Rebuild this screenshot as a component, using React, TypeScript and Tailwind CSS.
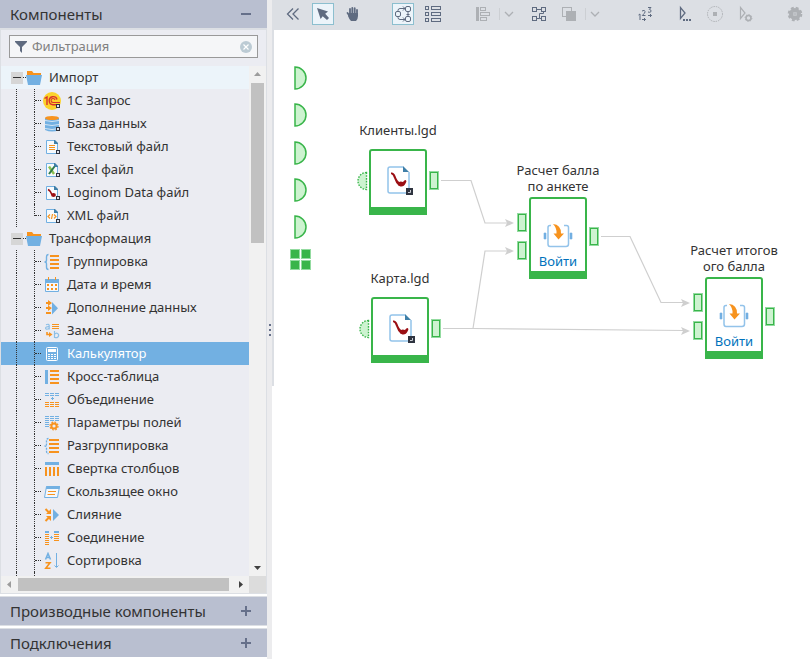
import React from "react";

const BLUE = "#72b0e2";
const ORANGE = "#f7931e";
const DARK = "#2f3440";

function Marker() {
  return (
    <>
      <rect x="13" y="12" width="4" height="4" fill={DARK} />
      <rect x="14" y="13" width="2" height="2" fill="#dfe3ec" />
    </>
  );
}

function FileShape({ children }: { children: React.ReactNode }) {
  return (
    <>
      <path d="M3.5 2.5H11L14.5 6V15.5H3.5Z" fill="#f6fafd" stroke={BLUE} />
      <path d="M11 2H12L15 5V6H11Z" fill="#3f7fa8" />
      {children}
      <Marker />
    </>
  );
}

function Bars({ x, w }: { x: number; w: number }) {
  return (
    <>
      {[2, 6, 10, 14].map((y) => (
        <rect key={y} x={x} y={y} width={w} height="2" fill={ORANGE} />
      ))}
    </>
  );
}

const icons: Record<string, React.ReactNode> = {
  onec: (
    <>
      <circle cx="9" cy="9" r="9" fill="#fcd32a" />
      <g fill="none" stroke="#d8322c" strokeWidth="1.4">
        <path d="M1.5 6.5L4 5V13" />
        <path d="M14 7.500A4 4 0 1 0 10 12.700H17" />
        <path d="M12 8A2 2 0 1 0 10 10.500H17" strokeWidth="1.1" />
      </g>
      <Marker />
    </>
  ),
  db: (
    <>
      <path d="M2 3V15Q9 18 16 15V3Z" fill={BLUE} />
      <ellipse cx="9" cy="3" rx="7" ry="2" fill={ORANGE} />
      <path d="M2 5.5Q9 7.500 16 5.5M2 9.5Q9 11.500 16 9.5M2 13.5Q9 15.500 16 13.5" fill="none" stroke="#d3e4f4" />
      <Marker />
    </>
  ),
  text: (
    <FileShape>
      <path d="M6 7.5H12M6 9.5H12M6 11.5H12" stroke={ORANGE} />
    </FileShape>
  ),
  excel: (
    <FileShape>
      <path d="M6 5.5L11 13" stroke="#8cc152" strokeWidth="2.4" />
      <path d="M11.5 5.5L6 13" stroke="#2f7a4a" strokeWidth="2" />
    </FileShape>
  ),
  lgd: (
    <FileShape>
      <path d="M5 5.5Q7.5 6.5 9 11" fill="none" stroke="#9b0f14" strokeWidth="1.4" />
      <ellipse cx="10.5" cy="11" rx="2.4" ry="2" fill="#9b0f14" />
    </FileShape>
  ),
  xml: (
    <FileShape>
      <path d="M7 7.5L5 9.5L7 11.5M11 7.5L13 9.5L11 11.5M9.5 7L8.5 12" fill="none" stroke={ORANGE} strokeWidth="1.2" />
    </FileShape>
  ),
  group: (
    <>
      <path d="M5.5 1.5Q3.5 1.5 3.5 4V7Q3.5 9 1.5 9Q3.5 9 3.5 11V14Q3.5 16.5 5.5 16.5" fill="none" stroke={BLUE} strokeWidth="1.4" />
      <Bars x={7} w={9} />
    </>
  ),
  date: (
    <>
      <path d="M2.5 4.5H15.5V15.5H2.5Z" fill="#f4f7fb" stroke={BLUE} />
      <rect x="2" y="3" width="14" height="4" fill={BLUE} />
      <path d="M5.5 1V4M12.5 1V4" stroke={ORANGE} />
      <path d="M4 9H14M4 13H14" stroke={ORANGE} strokeWidth="2" strokeDasharray="2 2" />
    </>
  ),
  extend: (
    <>
      <path d="M3 4H7M3 9H7M3 14H8" stroke={ORANGE} strokeWidth="2" />
      <path d="M5 1L9 4L5 7ZM5 6.5L9 9L5 12Z" fill={ORANGE} />
      <path d="M9 3L15 9.2L9 15.5Z" fill={BLUE} />
    </>
  ),
  replace: (
    <>
      <path d="M3 2.7Q6 1.500 6.2 3.500V7.500M6 4.700Q2.5 4.500 2.6 6.2Q3.2 8.1 6 6.500" fill="none" stroke="#8dbfe6" strokeWidth="1.2" />
      <path d="M11.5 9V16M11.5 12.5Q12.5 11 14 11.2Q16 11.8 15.6 14Q14.5 16.6 11.5 15.2" fill="none" stroke="#8dbfe6" strokeWidth="1.2" />
      <path d="M9 2.5H16M9 4.5H16M9 6.5H16" stroke={ORANGE} />
      <path d="M4 10V12.5H6.500" fill="none" stroke={ORANGE} strokeWidth="1.6" />
      <path d="M6 10L9.500 12.5L6 15Z" fill={ORANGE} />
    </>
  ),
  calc: (
    <>
      <rect x="3.5" y="2.5" width="11" height="13" rx="1" fill="#72b0e2" stroke="#fff" />
      <rect x="5" y="4" width="8" height="3" fill="#fff" />
      <path d="M5 9.5H13M5 11.5H13M5 13.5H13" stroke="#fff" strokeDasharray="2 1" />
    </>
  ),
  cross: (
    <>
      <rect x="2" y="2" width="3" height="14" fill={BLUE} />
      <Bars x={7} w={9} />
    </>
  ),
  union: (
    <>
      <path d="M2 2.5H16M2 4.5H16" stroke={BLUE} strokeDasharray="4 1" />
      <path d="M9.5 6V9M8 7.5H11" stroke={BLUE} />
      <path d="M2 11.5H16M2 13.5H16M2 15.5H16" stroke={ORANGE} strokeDasharray="4 1" />
    </>
  ),
  fields: (
    <>
      <path d="M2 2.5H16M2 4.5H16M2 6.5H16" stroke={BLUE} strokeDasharray="4 1" />
      <path d="M2 8.5H6M2 10.5H6M2 12.5H6" stroke={BLUE} />
      <circle cx="11" cy="12" r="2.6" fill="none" stroke={ORANGE} strokeWidth="2" />
      <circle cx="11" cy="12" r="4" fill="none" stroke={ORANGE} strokeWidth="1.2" strokeDasharray="1.7 1.440" />
    </>
  ),
  ungroup: (
    <>
      <path d="M5.5 1.5Q3.5 1.5 3.5 4V7Q3.5 9 1.5 9Q3.5 9 3.5 11V14Q3.5 16.5 5.5 16.5" fill="none" stroke={BLUE} strokeWidth="1.3" strokeDasharray="2 1" />
      <Bars x={6} w={10} />
    </>
  ),
  fold: (
    <>
      <rect x="2" y="2" width="14" height="3" fill={BLUE} />
      <path d="M3 7V16M7 7V16M11 7V16M15 7V16" stroke={ORANGE} strokeWidth="2" />
    </>
  ),
  window: (
    <>
      <path d="M3.5 3.5H16.5L14.5 14.5H1.5Z" fill="#f4f7fb" stroke={BLUE} />
      <path d="M3.5 3H17L16.5 6H3Z" fill={BLUE} />
      <path d="M5 8.5H13M4.5 11.5H12" stroke={ORANGE} />
    </>
  ),
  merge: (
    <>
      <path d="M2.5 3L6 6.5M2.5 15L6 11.5" stroke={ORANGE} strokeWidth="2" />
      <path d="M8 3V8H3ZM8 15V10H3Z" fill={ORANGE} />
      <path d="M10 3L16 9L10 15Z" fill={BLUE} />
    </>
  ),
  join: (
    <>
      <path d="M2 3H6M11 3H16" stroke={BLUE} strokeWidth="2" />
      <path d="M4 5V16" stroke={ORANGE} strokeWidth="4" strokeDasharray="1 1" />
      <path d="M13.5 5V13" stroke={ORANGE} strokeWidth="5" strokeDasharray="1 1" />
      <path d="M8.5 7V10M7 8.5H10" stroke={BLUE} />
    </>
  ),
  sort: (
    <>
      <path d="M2.5 7.5L5 1.5L7.5 7.5M3.5 5.5H6.5" fill="none" stroke={BLUE} strokeWidth="1.5" />
      <path d="M2.5 10.8H7L2.8 16.3H7.5" fill="none" stroke={ORANGE} strokeWidth="1.6" />
      <path d="M13.5 1V15M11.5 13.5L13.5 15.5L15.5 13.5" fill="none" stroke={BLUE} />
    </>
  ),
};

type Item = { icon: string; label: string; selected?: boolean };

const groups: { label: string; hover?: boolean; open?: boolean; items: Item[] }[] = [
  {
    label: "Импорт",
    hover: true,
    items: [
      { icon: "onec", label: "1С Запрос" },
      { icon: "db", label: "База данных" },
      { icon: "text", label: "Текстовый файл" },
      { icon: "excel", label: "Excel файл" },
      { icon: "lgd", label: "Loginom Data файл" },
      { icon: "xml", label: "XML файл" },
    ],
  },
  {
    label: "Трансформация",
    open: true,
    items: [
      { icon: "group", label: "Группировка" },
      { icon: "date", label: "Дата и время" },
      { icon: "extend", label: "Дополнение данных" },
      { icon: "replace", label: "Замена" },
      { icon: "calc", label: "Калькулятор", selected: true },
      { icon: "cross", label: "Кросс-таблица" },
      { icon: "union", label: "Объединение" },
      { icon: "fields", label: "Параметры полей" },
      { icon: "ungroup", label: "Разгруппировка" },
      { icon: "fold", label: "Свертка столбцов" },
      { icon: "window", label: "Скользящее окно" },
      { icon: "merge", label: "Слияние" },
      { icon: "join", label: "Соединение" },
      { icon: "sort", label: "Сортировка" },
    ],
  },
];

const guide = "border-dotted border-[#333]";

function TreeLeaf({ item, last }: { item: Item; last: boolean }) {
  return (
    <li className={`flex h-[23px] shrink-0 items-center pl-[15px] whitespace-nowrap ${item.selected ? "bg-[#72b0e2] text-white" : ""}`}>
      <span className={`h-full w-[18px] shrink-0 border-l ${guide}`} />
      <span className={`w-[9px] shrink-0 self-start border-l ${guide} ${last ? "h-3" : "h-full"}`}>
        <span className={`block h-3 w-[6px] border-b ${guide}`} />
      </span>
      <svg width="18" height="18" viewBox="0 0 18 18" className="shrink-0">{icons[item.icon]}</svg>
      <span className="pl-[6px]">{item.label}</span>
    </li>
  );
}

function Tree() {
  return (
    <ul className="flex min-w-0 flex-1 flex-col overflow-hidden">
      {groups.map((g) => (
        <li key={g.label} className="shrink-0">
          <div className={`flex h-[23px] items-center pl-[10px] ${g.hover ? "bg-[#ecf4fa]" : ""}`}>
            <button aria-label="Свернуть" className="flex h-3 w-3 items-center justify-center bg-[#d6d6d6]">
              <span className="h-px w-2 bg-[#333]" />
            </button>
            <span className={`w-[3px] border-b ${guide}`} />
            <svg width="16" height="17" viewBox="0 0 16 17">
              <path d="M1 2H6L7.5 4H15V8H1Z" fill={ORANGE} />
              <path d="M0 6H16L14 16H2Z" fill={BLUE} />
            </svg>
            <span className="pl-[7px]">{g.label}</span>
          </div>
          <ul>
            {g.items.map((it, i) => (
              <TreeLeaf key={it.label} item={it} last={!g.open && i === g.items.length - 1} />
            ))}
          </ul>
        </li>
      ))}
      <li aria-hidden="true" className="flex flex-1 pl-[15px]">
        <span className={`w-[18px] border-l ${guide}`} />
        <span className={`border-l ${guide}`} />
      </li>
    </ul>
  );
}

function SectionHeader({ title, open }: { title: string; open?: boolean }) {
  return (
    <button className="flex h-7 w-full shrink-0 items-center justify-between bg-[#b9bfd0] pr-4 pl-[10px] text-[15px] text-[#333]">
      <span>{title}</span>
      <svg width="10" height="10" viewBox="0 0 10 10" stroke="#66708a" strokeWidth="2">
        <path d={open ? "M0 5H10" : "M0 5H10M5 0V10"} />
      </svg>
    </button>
  );
}

function ScrollArrow({ d, label, dim }: { d: string; label: string; dim?: boolean }) {
  return (
    <button aria-label={label} className="flex h-[17px] w-[17px] shrink-0 items-center justify-center">
      <svg width="7" height="7" viewBox="0 0 7 7" fill={dim ? "#9c9c9c" : "#404040"}>
        <path d={d} />
      </svg>
    </button>
  );
}

function Sidebar() {
  return (
    <aside className="flex w-[267px] shrink-0 flex-col bg-white">
      <SectionHeader title="Компоненты" open />
      <div className="flex min-h-0 flex-1 flex-col border border-t-2 border-[#dcdfe4] bg-[#ebecf2]">
        <div className="mx-2 mt-[5px] mb-2 flex h-[23px] shrink-0 items-center border border-[#999] bg-[#f5f6f8] px-[5px]">
          <svg width="12" height="12" viewBox="0 0 12 12" fill="#5f6b80">
            <path d="M0 0H12V1L7 6V12L5 10V6L0 1Z" />
          </svg>
          <input
            aria-label="Фильтрация"
            placeholder="Фильтрация"
            className="ml-[5px] min-w-0 flex-1 bg-transparent text-[13px] text-[#333] outline-none placeholder:text-[#808080]"
          />
          <button aria-label="Очистить">
            <svg width="12" height="12" viewBox="0 0 12 12">
              <circle cx="6" cy="6" r="6" fill="#bccbd4" />
              <path d="M3.5 3.5L8.5 8.5M8.5 3.5L3.5 8.5" stroke="#fff" strokeWidth="1.2" />
            </svg>
          </button>
        </div>
        <div className="flex min-h-0 flex-1">
          <Tree />
          <div className="flex w-[17px] shrink-0 flex-col items-center bg-[#f1f1f1]">
            <ScrollArrow label="Вверх" d="M0 5L3.5 1L7 5Z" dim />
            <div className="h-[160px] w-[13px] bg-[#c1c1c1]" />
            <div className="flex-1" />
            <ScrollArrow label="Вниз" d="M0 2L3.5 6L7 2Z" />
          </div>
        </div>
        <div className="flex h-[17px] shrink-0 items-center bg-[#dcdcdc]">
          <div className="flex flex-1 items-center bg-[#f1f1f1]">
            <ScrollArrow label="Влево" d="M5 0L1 3.5L5 7Z" dim />
            <div className="h-[13px] flex-1 bg-[#c1c1c1]" />
            <div className="w-[3px]" />
            <ScrollArrow label="Вправо" d="M2 0L6 3.5L2 7Z" />
          </div>
          <div className="w-[17px]" />
        </div>
      </div>
      <div className="mt-[2px] border-y border-[#dcdfe4]">
        <SectionHeader title="Производные компоненты" />
      </div>
      <div className="mt-[2px] mb-[2px] border-t border-[#dcdfe4]">
        <SectionHeader title="Подключения" />
      </div>
    </aside>
  );
}

function Tool({ label, active, dim, className = "", children }: { label: string; active?: boolean; dim?: boolean; className?: string; children: React.ReactNode }) {
  return (
    <button
      aria-label={label}
      className={`h-[22px] w-[22px] shrink-0 ${dim ? "text-[#adb0b4]" : "text-[#5f6b80]"} ${active ? "bg-[#ecf4fa] outline -outline-offset-1 outline-[#8cbfcf]" : ""} ${className}`}
    >
      <svg width="22" height="22" viewBox="0 0 22 22" fill="none" stroke="currentColor">{children}</svg>
    </button>
  );
}

function MenuChevron({ label }: { label: string }) {
  return (
    <button aria-label={label} className="-ml-[3px] flex w-[21px] shrink-0 items-center gap-1 text-[#adb0b4]">
      <span className="h-3 w-px bg-[#cccfd3]" />
      <svg width="10" height="6" viewBox="0 0 10 6" fill="none" stroke="currentColor" strokeWidth="1.3">
        <path d="M1 1L5 5L9 1" />
      </svg>
    </button>
  );
}

function Toolbar() {
  return (
    <div className="flex h-[30px] shrink-0 items-center gap-2 bg-[#dcdfe4] pr-1 pb-[2px] pl-[10px]">
      <Tool label="Свернуть панель">
        <path d="M11 5.5L5.5 11L11 16.5M16.5 5.5L11 11L16.5 16.5" strokeWidth="1.3" />
      </Tool>
      <Tool label="Выделение" active>
        <path d="M5 5L16 8.500L13.2 10.700L17 15L15 17L10.7 13.200L8.6 16Z" fill="currentColor" stroke="none" />
      </Tool>
      <Tool label="Перемещение">
        <path d="M8 6V12M10.3 4.8V12M12.7 5.2V12M15 7V12M5.5 10L8 13.5" strokeWidth="1.8" strokeLinecap="round" />
        <path d="M7 10H16V13Q16 16 14 18H9Q7 16 6 13Z" fill="currentColor" stroke="none" />
      </Tool>
      <Tool label="Сценарий" active className="ml-5">
        <rect x="3.5" y="8.5" width="5" height="5" rx="1.5" />
        <rect x="13.5" y="3.5" width="5" height="5" rx="1.5" />
        <rect x="13.5" y="13.5" width="5" height="5" rx="1.5" />
        <path d="M6 8V7.5Q6 5.5 8 5.5H13M6 14V14.5Q6 16.5 8 16.5H13M16 9V13M11 3.5L13 5.5L11 7.5M11 14.5L13 16.5L11 18.5M14.5 11.5H17.5" />
      </Tool>
      <Tool label="Список">
        {[3.5, 9.5, 15.5].map((y) => (
          <g key={y}>
            <rect x="3.5" y={y} width="3" height="3" />
            <rect x="9.5" y={y} width="9" height="3" />
          </g>
        ))}
      </Tool>
      <Tool label="Выравнивание" dim className="ml-5">
        <rect x="4" y="4" width="3" height="14" fill="currentColor" stroke="none" />
        <rect x="8.5" y="4.5" width="5" height="3" />
        <rect x="8.5" y="9.5" width="9" height="3" />
        <rect x="8.5" y="14.5" width="6" height="3" />
      </Tool>
      <MenuChevron label="Варианты выравнивания" />
      <Tool label="Автоматическое расположение">
        <rect x="4.5" y="4.5" width="4" height="4" />
        <rect x="13.5" y="4.5" width="4" height="4" />
        <rect x="4.5" y="13.5" width="4" height="4" />
        <rect x="13.5" y="13.5" width="4" height="4" />
        <path d="M9 6.5H13M9 15.5H11.5V10.5H15.5V9M11.5 15.5H13" />
      </Tool>
      <Tool label="Порядок" dim>
        <rect x="4.5" y="4.5" width="9" height="9" />
        <rect x="8" y="8" width="10" height="10" fill="currentColor" stroke="none" />
      </Tool>
      <MenuChevron label="Варианты порядка" />
      <Tool label="Порядок выполнения" className="ml-5">
        <path d="M4.5 12L6 11V17M8 8Q10.5 6.5 11.2 8.5Q11 10 8.3 12.5H11.5M14 4.5H17L15.3 6.3Q17.6 6.8 17 8.6Q16 9.8 14 9M8 16.5H11.5M10 15L11.5 16.5L10 18M14 12.5H17.5M16 11L17.5 12.5L16 14" />
      </Tool>
      <Tool label="Выполнить все" className="ml-[10px]">
        <path d="M6.5 4.5V15.5L11 10Z" strokeWidth="1.3" />
        <path d="M9 17H17" strokeWidth="2" strokeDasharray="2 1" />
      </Tool>
      <Tool label="Остановить" dim>
        <circle cx="11" cy="11" r="7.5" strokeDasharray="1.4 1" />
        <rect x="9" y="9" width="4" height="4" fill="currentColor" stroke="none" />
      </Tool>
      <Tool label="Параметры выполнения" dim>
        <path d="M6.5 4.5V15.5L11 10Z" strokeWidth="1.2" />
        <circle cx="14.5" cy="15" r="2.5" strokeWidth="1.6" />
        <circle cx="14.5" cy="15" r="3.4" strokeDasharray="1.3 1.3" />
      </Tool>
      <Tool label="Настройки" dim className="ml-auto">
        <circle cx="11" cy="11" r="4" strokeWidth="4" />
        <circle cx="11" cy="11" r="6.3" strokeWidth="2" strokeDasharray="2.9 2.05" />
        <circle cx="11" cy="11" r="1.2" />
      </Tool>
    </div>
  );
}

const portPos: Record<string, string> = {
  a: "left-[157px] top-[141px]",
  b: "left-[159px] top-[289px]",
  c1: "left-[245px] top-[183px]",
  c2: "left-[245px] top-[211px]",
  c3: "left-[317px] top-[197px]",
  d1: "left-[421px] top-[263px]",
  d2: "left-[421px] top-[291px]",
  d3: "left-[493px] top-[277px]",
};

function Port({ at }: { at: string }) {
  return (
    <span className={`absolute h-[19px] w-[10px] border border-[#93dba0] ${portPos[at]}`}>
      <span className="block h-full w-full border border-[#39b54a] bg-[#cdf3d0]" />
    </span>
  );
}

function DashedPort({ className }: { className: string }) {
  return (
    <svg width="11" height="20" viewBox="0 0 11 20" className={`absolute ${className}`}>
      <path d="M9.5 1.5A8.5 8.5 0 0 0 9.5 18.5Z" fill="#cdf3d0" stroke="#39b54a" strokeWidth="1.4" strokeDasharray="1.6 1.2" />
    </svg>
  );
}

function LgdFileIcon() {
  return (
    <svg width="32" height="30" viewBox="-4 0 32 30">
      <path d="M17 1H4Q2 1 2 3V25Q2 27 4 27H21Q23 27 23 25V6" fill="#fff" stroke="#93c3ea" strokeWidth="1.5" />
      <path d="M17 0L23 6H17Z" fill="#3f7fa8" />
      <path d="M5 6.5Q8 6 9.5 10Q11 15 14.5 17L13 20Q9.5 17 8 12Q7 8.5 5 8Z" fill="#9b0f14" />
      <path d="M12 18Q13 14.500 17 16Q18 14 20 14Q21 15.500 19.500 17.500Q18 21 14.500 20.500Q12.500 20 12 18Z" fill="#9b0f14" />
      <rect x="20" y="22" width="7" height="7" fill={DARK} />
      <path d="M22 26.500H24.500V24" fill="none" stroke="#c9ccd3" />
    </svg>
  );
}

function SubmodelIcon() {
  return (
    <svg width="30" height="26" viewBox="0 0 30 26">
      <path d="M8 2.5H7Q5 2.5 5 4.500V21Q5 23.500 7 23.500H23Q25.500 23.500 25.500 21V4.500Q25.500 2.500 23.500 2.500H21" fill="none" stroke="#93c3ea" strokeWidth="1.5" />
      <path d="M1 10H3V16H1ZM27 10H29V16H27Z" fill={BLUE} stroke={BLUE} strokeWidth="0.6" />
      <path d="M10 1Q18 1.500 18 10.500H21L15.500 16.500L10.500 10.500H13.500Q14 5 10 1Z" fill={ORANGE} />
    </svg>
  );
}

function Node({ className, title, enter }: { className: string; title: React.ReactNode; enter?: boolean }) {
  return (
    <div className={`absolute flex w-[98px] flex-col items-center ${className}`}>
      <div className="text-center text-[13px] leading-4 whitespace-nowrap text-[#333]">{title}</div>
      <div className={`flex w-[58px] flex-col items-center rounded-t-[3px] border-2 border-b-8 border-[#39b54a] bg-white ${enter ? "mt-[3px] h-[82px] gap-1 pt-6" : "mt-[11px] h-[66px] pt-[15px]"}`}>
        {enter ? <SubmodelIcon /> : <LgdFileIcon />}
        {enter && <a href="#enter" className="text-[13px] leading-4 text-[#0072bc]">Войти</a>}
      </div>
    </div>
  );
}

const inlets = ["top-[36px]", "top-[73px]", "top-[111px]", "top-[148px]", "top-[185px]"];

function Canvas() {
  return (
    <div className="relative min-w-0 flex-1 overflow-hidden bg-white">
      <svg className="absolute inset-0 h-full w-full" fill="none" stroke="#cfcfcf" strokeWidth="1.2">
        <path d="M169 150.500H199L213 193H236" />
        <path d="M171 298.500H201L213 221H236" />
        <path d="M201 298.500L412 300.500" />
        <path d="M329 206.500H358L389 272.500H412" />
        <g fill="#cfcfcf" stroke="none">
          <path d="M233 189L242 193L233 197L235 193Z" />
          <path d="M233 217L242 221L233 225L235 221Z" />
          <path d="M409 269L418 273L409 277L411 273Z" />
          <path d="M409 297L418 301L409 305L411 301Z" />
        </g>
      </svg>
      {inlets.map((top) => (
        <svg key={top} width="13" height="24" viewBox="0 0 13 24" className={`absolute left-[22px] ${top}`}>
          <path d="M1 1A11 11 0 0 1 1 23Z" fill="#cdf3d0" stroke="#39b54a" strokeWidth="1.5" />
        </svg>
      ))}
      <div className="absolute top-[219px] left-[18px] grid grid-cols-2 gap-px">
        {[0, 1, 2, 3].map((i) => (
          <span key={i} className="h-[10px] w-[10px] border border-[#93dba0] bg-[#39b54a]" />
        ))}
      </div>
      <Node className="top-[92px] left-[77px]" title="Клиенты.lgd" />
      <Node className="top-[240px] left-[79px]" title="Карта.lgd" />
      <Node className="top-[132px] left-[237px]" title={<>Расчет балла<br />по анкете</>} enter />
      <Node className="top-[212px] left-[413px]" title={<>Расчет итогов<br />ого балла</>} enter />
      <DashedPort className="top-[141px] left-[85px]" />
      <DashedPort className="top-[289px] left-[87px]" />
      {Object.keys(portPos).map((k) => (
        <Port key={k} at={k} />
      ))}
    </div>
  );
}

export default function App() {
  return (
    <div className="flex h-screen overflow-hidden bg-white font-['Noto_Sans','Open_Sans',sans-serif] text-[13px] text-[#333]">
      <Sidebar />
      <div className="flex w-[5px] shrink-0 flex-col items-center justify-center gap-[3px] bg-[#ececee]">
        <span className="h-[2px] w-[2px] bg-[#66708a]" />
        <span className="h-[2px] w-[2px] bg-[#66708a]" />
        <span className="h-[2px] w-[2px] bg-[#66708a]" />
      </div>
      <main className="flex min-w-0 flex-1 flex-col">
        <Toolbar />
        <div className="flex min-h-0 flex-1">
          <div className="z-10 -mr-[2px] h-[356px] w-[2px] shrink-0 bg-[#dcdfe4]" />
          <Canvas />
        </div>
      </main>
    </div>
  );
}
